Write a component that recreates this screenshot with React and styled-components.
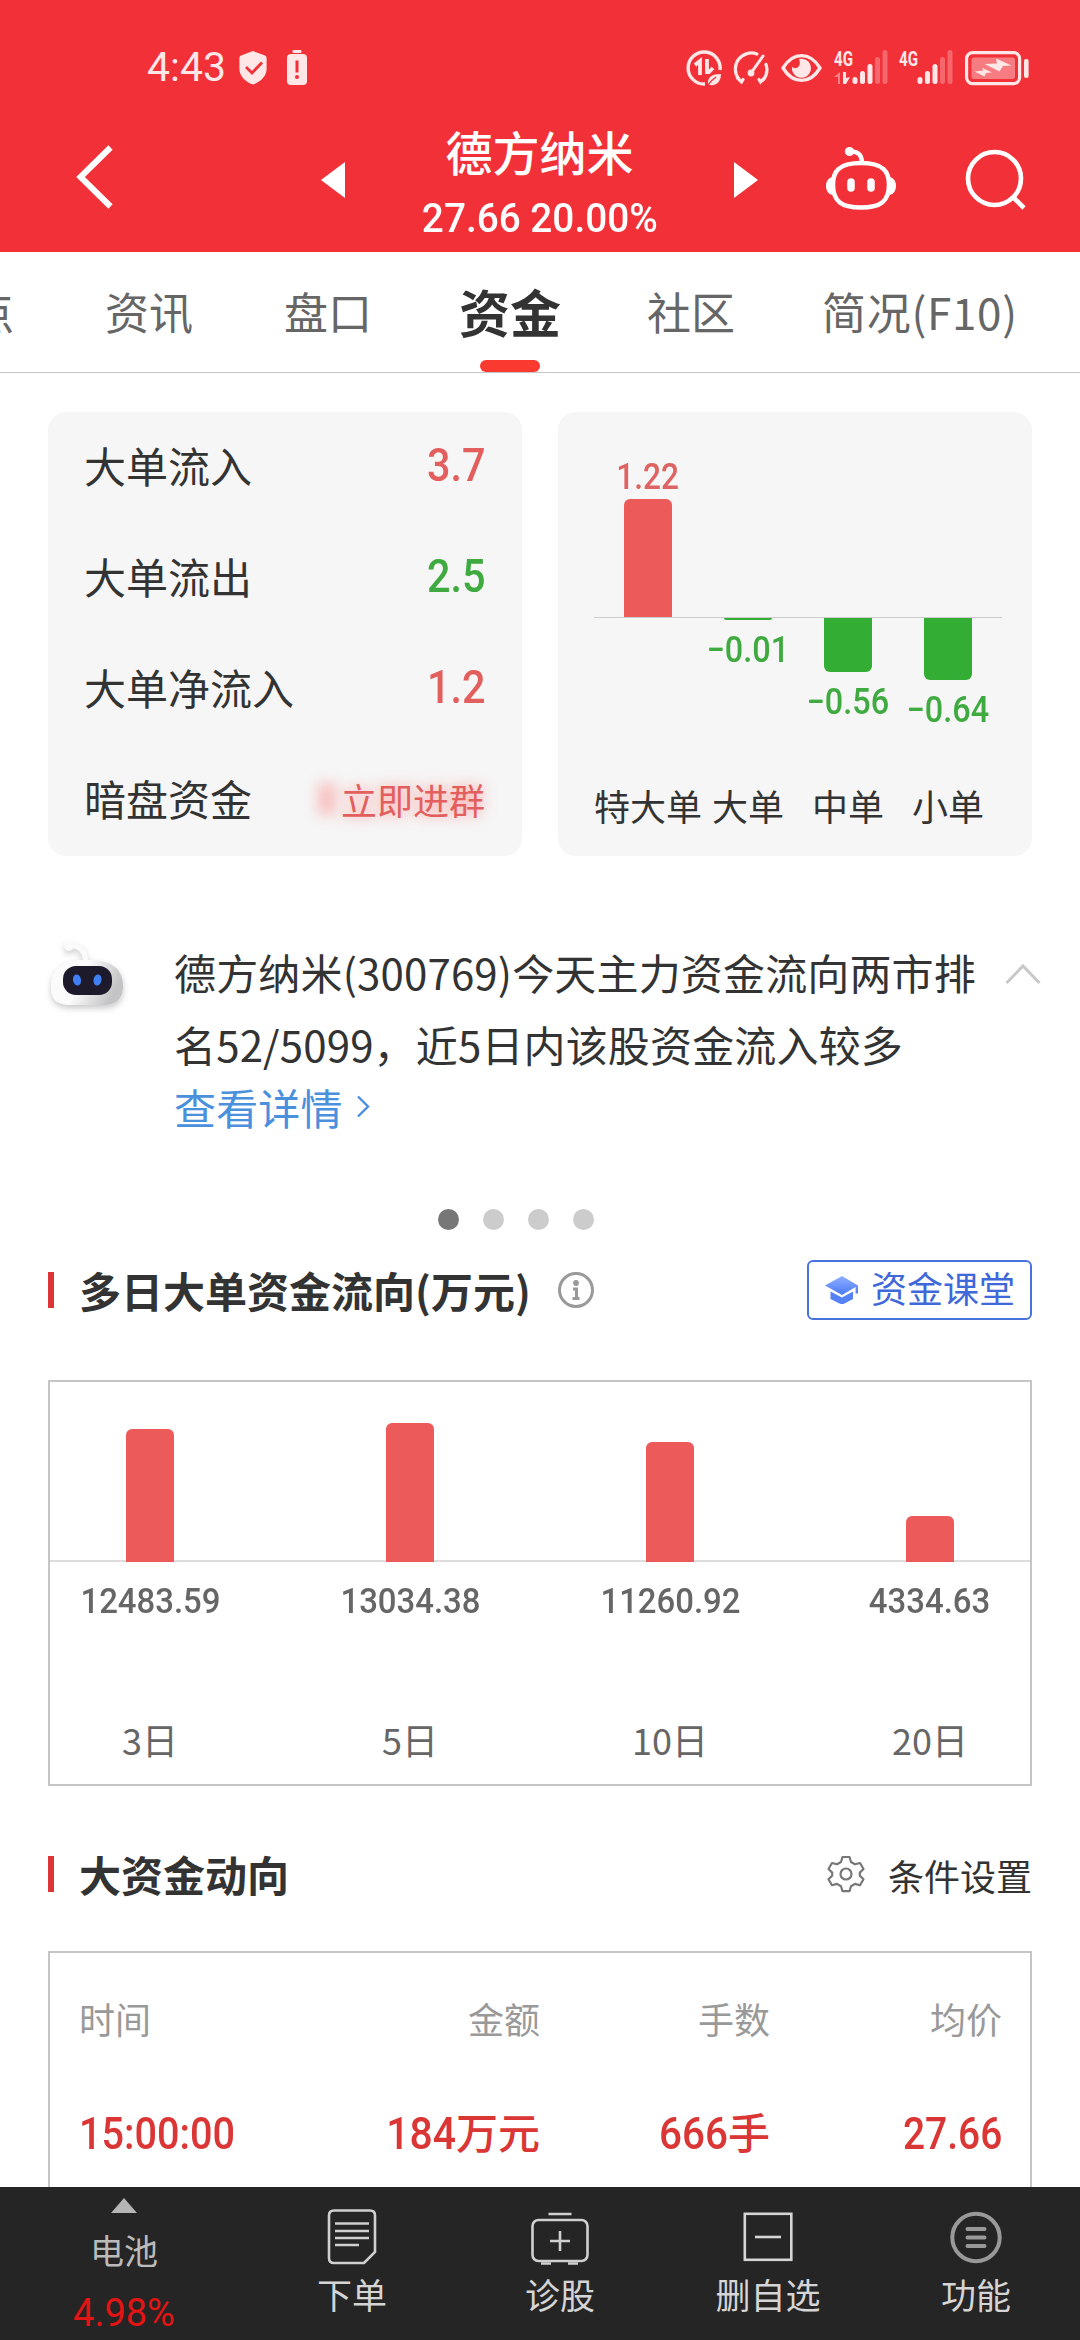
import { useState } from "react";
import styled, { createGlobalStyle } from "styled-components";

const GlobalStyle = createGlobalStyle`
    body {
        margin: 0;
        background: #fff;
        font-family: "Noto Sans CJK SC", "Noto Sans", sans-serif;
        color: #333;
    }
    svg {
        display: block;
        flex: none;
        overflow: visible;
    }
`
const Page = styled.div`
    width: 1080px;
    height: 2340px;
    overflow: hidden;
    display: flex;
    flex-direction: column;
`
const Num = styled.span`
    display: inline-block;
    font-family: Roboto, sans-serif;
    font-weight: ${(p) => p.$weight || 500};
    font-size: ${(p) => p.$size}px;
    line-height: 1.2;
    white-space: nowrap;
    transform: scaleX(${(p) => p.$x || 1});
    transform-origin: ${(p) => p.$from || "center"};
`

/* ---------- header ---------- */
const Header = styled.header`
    flex: none;
    height: 252px;
    background: #f13038;
    color: #fff;
`
const StatusBar = styled.div`
    height: 110px;
    box-sizing: border-box;
    padding: 25px 51px 0 147px;
    display: flex;
    align-items: center;
    color: #ffe6e7;
`
const StatusRight = styled.div`
    margin-left: auto;
    display: flex;
    align-items: center;
    gap: 11.7px;
`
const StatusLeft = styled.div`
    display: flex;
    align-items: center;
    gap: 20px;
    svg:first-of-type {
        margin-left: -7px;
    }
`
const Nav = styled.div`
    height: 142px;
    display: flex;
    align-items: center;
    padding: 0 54px 0 76px;
`
const NavTitle = styled.div`
    width: 390px;
    text-align: center;
    display: flex;
    flex-direction: column;
    align-items: center;
`
const StockName = styled.div`
    font-size: 47px;
    line-height: 62px;
    font-weight: 500;
    margin: 1px 0 12px;
`
const NavIcon = styled.svg`
    margin-left: ${(p) => p.$left}px;
`

/* ---------- tabs ---------- */
const Tabs = styled.nav`
    flex: none;
    height: 121px;
    box-sizing: border-box;
    border-bottom: 1px solid #c5c5c5;
    display: flex;
    gap: 91px;
`
const Tab = styled.div`
    position: relative;
    flex: none;
    font-size: ${(p) => (p.$on ? 51 : 44)}px;
    font-weight: ${(p) => (p.$on ? 700 : 400)};
    color: ${(p) => (p.$on ? "#333" : "#666")};
    line-height: 118px;
    margin: ${(p) => (p.$on ? "0 -5px 0 -4px" : 0)};
    &:first-child {
        margin-left: -30px;
    }
    &:last-child {
        margin-left: -4px;
        letter-spacing: 0.7px;
    }
    &::after {
        content: "";
        display: ${(p) => (p.$on ? "block" : "none")};
        position: absolute;
        left: 21px;
        bottom: 0;
        width: 60px;
        height: 12px;
        border-radius: 6px;
        background: #fa3a30;
    }
`

/* ---------- cards ---------- */
const Cards = styled.div`
    flex: none;
    display: flex;
    justify-content: space-between;
    padding: 39px 48px 0;
`
const Card = styled.div`
    width: 474px;
    height: 444px;
    border-radius: 18px;
    background: #f6f6f6;
`
const FlowRow = styled.div`
    height: 111px;
    box-sizing: border-box;
    padding: 0 37px 7px;
    display: flex;
    align-items: center;
    justify-content: space-between;
    font-size: 42px;
    span:first-child {
        margin-left: -1px;
    }
`
const FlowValue = styled.span`
    color: ${(p) => (p.$up ? "#e25f5e" : "#3faa3f")};
    display: flex;
    padding-top: 2px;
`
const JoinLink = styled.span`
    font-size: 36px;
    color: #e25f5e;
    text-shadow: 0 0 14px rgba(255, 70, 70, 0.55);
    padding-top: 3px;
    display: flex;
    align-items: center;
    &::before {
        content: "";
        width: 18px;
        height: 32px;
        margin-right: 5px;
        background: rgba(255, 70, 70, 0.3);
        filter: blur(7px);
    }
`
const OrderChart = styled.div`
    margin: 0 30px 0 36px;
    height: 444px;
`
const Above = styled.div`
    height: ${(p) => p.$height}px;
    display: flex;
    align-items: flex-end;
    gap: 52px;
    padding: 0 30px;
    border-bottom: 1px solid #ccc;
`
const Below = styled.div`
    height: ${(p) => p.$height}px;
    display: flex;
    gap: 52px;
    padding: 0 30px;
`
const Slot = styled.div`
    width: 48px;
    flex: none;
    display: flex;
    flex-direction: column;
    align-items: center;
    white-space: nowrap;
    color: ${(p) => p.$color || "#333"};
`
const Bar = styled.div`
    width: 48px;
    height: ${(p) => p.$h}px;
    background: ${(p) => (p.$down ? "#34ad34" : "#ed5a5a")};
    border-radius: ${(p) => (p.$down ? "0 0 6px 6px" : "6px 6px 0 0")};
    margin-bottom: ${(p) => (p.$down ? 9 : 0)}px;
`
const OrderName = styled.div`
    font-size: 36px;
    line-height: 48px;
`

/* ---------- message ---------- */
const Message = styled.div`
    flex: none;
    height: 353px;
    display: flex;
    padding: 80px 39px 0 46px;
    box-sizing: border-box;
`
const MessageText = styled.div`
    width: 832px;
    margin-left: 44px;
    font-size: 42px;
    line-height: 72px;
    letter-spacing: 0.16px;
    white-space: nowrap;
`
const DetailLink = styled.div`
    display: flex;
    align-items: center;
    gap: 14px;
    color: #4a90dd;
    line-height: 54px;
`
const Dots = styled.div`
    flex: none;
    height: 23px;
    display: flex;
    justify-content: center;
    gap: 24px;
    padding-right: 48px;
`
const Dot = styled.i`
    width: 21px;
    height: 21px;
    border-radius: 50%;
    background: ${(p) => (p.$on ? "#777" : "#ccc")};
`

/* ---------- sections ---------- */
const SectionHead = styled.div`
    flex: none;
    height: ${(p) => p.$height}px;
    box-sizing: border-box;
    display: flex;
    align-items: center;
    padding: ${(p) => p.$top || 0}px 48px ${(p) => p.$bottom || 0}px;
    &::before {
        content: "";
        width: 6px;
        height: 36px;
        background: #dd3435;
    }
`
const SectionTitle = styled.h2`
    margin: -1px 0 0 25px;
    font-size: 42px;
    line-height: 54px;
    font-weight: 700;
`
const InfoIcon = styled.svg`
    margin-left: 26px;
`
const ClassButton = styled.button`
    margin-left: auto;
    width: 225px;
    height: 60px;
    box-sizing: border-box;
    border: 2px solid #4a72dc;
    border-radius: 6px;
    background: #fff;
    display: flex;
    align-items: center;
    gap: 12px;
    padding: 0 0 0 16px;
    color: #3f68d8;
    font: 400 36px/48px "Noto Sans CJK SC", sans-serif;
    span {
        margin-top: -6px;
    }
`
const Setting = styled.div`
    margin-left: auto;
    display: flex;
    align-items: center;
    gap: 23px;
    font-size: 36px;
    line-height: 48px;
    span {
        margin-top: 1px;
    }
`
const DaysBox = styled.div`
    flex: none;
    margin: 0 48px;
    height: 406px;
    box-sizing: border-box;
    border: 2px solid #c5c5c5;
`
const DaysRow = styled.div`
    display: flex;
    justify-content: space-between;
    align-items: ${(p) => (p.$bars ? "flex-end" : "center")};
    padding: 0 76px;
    height: ${(p) => p.$height}px;
    background: ${(p) => (p.$bars ? "linear-gradient(#ddd, #ddd) bottom / 100% 2px no-repeat" : "none")};
    font-size: 36px;
`
const Table = styled.div`
    flex: none;
    margin: 0 48px;
    height: 236px;
    box-sizing: border-box;
    border: 2px solid #c5c5c5;
    border-bottom: 0;
    padding: 0 28px 0 29px;
`
const TableRow = styled.div`
    display: grid;
    grid-template-columns: 200px 261px 230px 232px;
    align-items: center;
    height: ${(p) => (p.$head ? 129 : 99)}px;
    font-size: ${(p) => (p.$head ? 36 : 42)}px;
    font-weight: ${(p) => (p.$head ? 400 : 500)};
    color: ${(p) => (p.$head ? "#999" : "#d93635")};
    div {
        text-align: right;
        white-space: nowrap;
        line-height: 56px;
    }
    div:first-child {
        text-align: left;
    }
`

/* ---------- bottom bar ---------- */
const Bottom = styled.footer`
    flex: none;
    height: 153px;
    background: #252525;
    display: flex;
`
const Sector = styled.div`
    width: 248px;
    display: flex;
    flex-direction: column;
    align-items: center;
    font-size: 34px;
    line-height: 44px;
    color: #bbb;
    padding-top: 11px;
    box-sizing: border-box;
    svg {
        margin-bottom: 15px;
    }
    span {
        color: #e31414;
        margin-top: 18px;
        line-height: 46px;
    }
`
const BottomItem = styled.div`
    width: 208px;
    display: flex;
    flex-direction: column;
    align-items: center;
    padding-top: 21px;
    box-sizing: border-box;
    font-size: 35px;
    line-height: 44px;
    color: #d5d5d5;
    svg {
        margin-bottom: 6px;
    }
`

const orders = [
    { name: "特大单", value: "1.22", h: 118 },
    { name: "大单", value: "−0.01", h: 2, down: true },
    { name: "中单", value: "−0.56", h: 54, down: true },
    { name: "小单", value: "−0.64", h: 62, down: true },
]
const days = [
    { name: "3日", value: "12483.59", h: 133 },
    { name: "5日", value: "13034.38", h: 139 },
    { name: "10日", value: "11260.92", h: 120 },
    { name: "20日", value: "4334.63", h: 46 },
]
const flows = [
    { name: "大单流入", value: "3.7", up: true },
    { name: "大单流出", value: "2.5", up: false },
    { name: "大单净流入", value: "1.2", up: true },
]
const tabs = ["点", "资讯", "盘口", "资金", "社区", "简况(F10)"]

function Signal({ data }) {
    return (
        <svg width="54" height="36" viewBox="0 0 54 36" fill="currentColor">
            <text x="0" y="15.500" fontFamily="Roboto" fontSize="20" fontWeight="700" textLength="19" lengthAdjust="spacingAndGlyphs">4G</text>
            {data && <path d="M6 22v12H4v-7H0z" opacity=".45" />}
            {data && <path d="M9 22h3v6l4-1-4 7H9z" />}
            <rect x="18.500" y="27" width="5" height="7" rx="2.500" />
            <rect x="26" y="21" width="5" height="13" rx="2.500" />
            <rect x="33.500" y="14" width="5" height="20" rx="2.500" />
            <rect x="41" y="7" width="5" height="27" rx="2.500" opacity=".3" />
            <rect x="48.500" y="0" width="5" height="34" rx="2.500" opacity=".3" />
        </svg>
    )
}

function StatusIcons() {
    return (
        <StatusRight>
            <svg width="36" height="36" viewBox="0 0 36 36" fill="none" stroke="currentColor" strokeWidth="3.400">
                <path d="M34 20A16 16 0 1 0 19 34" />
                <path d="M9 15l5-4v14M21 9v15M22 23l5-5" strokeWidth="3.800" />
                <path d="M22 35c-1-8 4-11 13-11 0 7-4 12-11 11z" fill="currentColor" stroke="none" />
                <path d="M22 35c3-4 5-6 8-8" stroke="#f13038" strokeWidth="1.400" />
            </svg>
            <svg width="36" height="36" viewBox="0 0 36 36" fill="none" stroke="currentColor" strokeWidth="3.200" strokeLinecap="round">
                <path d="M5.500 28.500A16 16 0 0 1 24 4" />
                <path d="M33 14.500a16 16 0 0 1-3 15.500" />
                <path d="M4.500 28l4 4 1.500-2.500M31.500 28l-4 4-1.500-2.500" />
                <path d="M30 6L18 23" strokeWidth="3" />
                <circle cx="18" cy="23" r="3.400" fill="currentColor" stroke="none" />
            </svg>
            <svg width="41" height="36" viewBox="0 0 41 36" fill="none" stroke="currentColor" strokeWidth="3.400">
                <path d="M2 18C12 1.500 29 1.500 39 18 29 34.500 12 34.500 2 18z" strokeLinejoin="round" />
                <path d="M18 9a9.500 9.500 0 1 1-7 8c4 3 10 0 7-8z" fill="currentColor" stroke="none" />
            </svg>
            <Signal data />
            <Signal />
            <svg width="64" height="36" viewBox="0 0 64 36">
                <rect x="1.600" y="2.600" width="53" height="31" rx="6" fill="none" stroke="currentColor" strokeWidth="3.200" />
                <rect x="6.500" y="7.500" width="43.500" height="21.500" rx="2.500" fill="currentColor" opacity=".42" />
                <path d="M19.500 14L32 13.500 31 8.500 46.500 15.500 38 16 34.500 21.500z" fill="currentColor" />
                <path d="M9.500 21.500L18 20.500 17.500 18 27 22.500 21 23 19.500 26.500z" fill="currentColor" />
                <rect x="59" y="9" width="4.600" height="19" rx="2" fill="currentColor" />
            </svg>
        </StatusRight>
    )
}

function App() {

    const [tab, setTab] = useState("资金");

    return (
        <Page>
            <GlobalStyle />
            <Header>
                <StatusBar>
                    <StatusLeft>
                        <Num $size={41} $weight={400}>4:43</Num>
                        <svg width="28" height="36" viewBox="0 0 28 36">
                            <path d="M14 1l12 4.500q1.600.6 1.600 2.500v11c0 7-6 13-13.600 15.500C6.400 32 .4 26 .4 19V8q0-1.900 1.600-2.500z" fill="currentColor" />
                            <path d="M7 17l6 6 10-10.500" fill="none" stroke="#f13038" strokeWidth="2.800" />
                        </svg>
                        <svg width="20" height="36" viewBox="0 0 20 36">
                            <rect x="5.500" y="0" width="9" height="3" rx="1" fill="currentColor" />
                            <rect x="0" y="4" width="20" height="31" rx="4" fill="currentColor" />
                            <path d="M10 10.500v12" stroke="#f13038" strokeWidth="3" />
                            <circle cx="10" cy="27" r="2" fill="#f13038" />
                        </svg>
                    </StatusLeft>
                    <StatusIcons />
                </StatusBar>
                <Nav>
                    <NavIcon $left={0} width="40" height="72" viewBox="0 0 40 72" fill="none" stroke="#fff" strokeWidth="6">
                        <path d="M34.500 2.500L4.500 32 34.500 61.500" />
                    </NavIcon>
                    <NavIcon $left={205} width="24" height="38" viewBox="0 0 24 38" fill="#fff">
                        <path d="M24 0v36L0 18z" />
                    </NavIcon>
                    <NavTitle>
                        <StockName>德方纳米</StockName>
                        <Num $size={41} $x={0.945}>27.66 20.00%</Num>
                    </NavTitle>
                    <NavIcon $left={0} width="24" height="38" viewBox="0 0 24 38" fill="#fff">
                        <path d="M0 0v36l24-18z" />
                    </NavIcon>
                    <NavIcon $left={68} width="70" height="72" viewBox="0 0 70 72" fill="none" stroke="#fff" strokeWidth="4.500">
                        <path d="M35 18C58 18 63 27 63 39.500 63 56 55 62.500 35 62.500S7 56 7 39.500C7 27 12 18 35 18z" />
                        <path d="M36 18C36 9 31 6 24 7" />
                        <circle cx="23.500" cy="6.500" r="4.600" fill="#fff" stroke="none" />
                        <path d="M6 32q-6 2-6 9t6 9zM64 32q6 2 6 9t-6 9z" fill="#fff" stroke="none" />
                        <path d="M25 37v6M45 37v6" strokeWidth="7.500" strokeLinecap="round" />
                    </NavIcon>
                    <NavIcon $left={70} width="60" height="72" viewBox="0 0 60 72" fill="none" stroke="#fff" strokeWidth="4.600">
                        <circle cx="28.500" cy="33.500" r="26.500" />
                        <path d="M47 52l11 11" />
                    </NavIcon>
                </Nav>
            </Header>
            <Tabs>
                {
                    tabs.map((a) => (
                        <Tab key={a} $on={a == tab} onClick={() => { setTab(a) }}>{a}</Tab>
                    ))
                }
            </Tabs>
            <Cards>
                <Card>
                    {
                        flows.map((a) => (
                            <FlowRow key={a.name}>
                                <span>{a.name}</span>
                                <FlowValue $up={a.up}><Num $size={47} $x={0.88} $from="right">{a.value}</Num></FlowValue>
                            </FlowRow>
                        ))
                    }
                    <FlowRow>
                        <span>暗盘资金</span>
                        <JoinLink>立即进群</JoinLink>
                    </FlowRow>
                </Card>
                <Card>
                    <OrderChart>
                        <Above $height={205}>
                            {
                                orders.map((a) => (
                                    <Slot key={a.name} $color="#dd6463">
                                        {!a.down && <Num $size={36} $x={0.88}>{a.value}</Num>}
                                        {!a.down && <Bar $h={a.h} />}
                                    </Slot>
                                ))
                            }
                        </Above>
                        <Below $height={163}>
                            {
                                orders.map((a) => (
                                    <Slot key={a.name} $color="#3faa3f">
                                        {a.down && <Bar $h={a.h} $down />}
                                        {a.down && <Num $size={36} $x={0.9}>{a.value}</Num>}
                                    </Slot>
                                ))
                            }
                        </Below>
                        <Below $height={60}>
                            {
                                orders.map((a) => (
                                    <Slot key={a.name}><OrderName>{a.name}</OrderName></Slot>
                                ))
                            }
                        </Below>
                    </OrderChart>
                </Card>
            </Cards>
            <Message>
                <svg width="84" height="84" viewBox="0 0 84 84">
                    <defs>
                        <linearGradient id="shell" x1="0" y1="0" x2="1" y2="0.300">
                            <stop offset="0.500" stopColor="#fbfbfb" />
                            <stop offset="1" stopColor="#c4c4c6" />
                        </linearGradient>
                        <filter id="soft" x="-30%" y="-30%" width="160%" height="170%">
                            <feDropShadow dx="0" dy="3" stdDeviation="3" floodColor="#000" floodOpacity="0.220" />
                        </filter>
                    </defs>
                    <g filter="url(#soft)">
                        <path d="M24 10q14-2 16 16" fill="none" stroke="#fbfbfb" strokeWidth="4.500" />
                        <circle cx="23" cy="10" r="4.500" fill="#fbfbfb" />
                        <path d="M42 24C66 24 77 33 77 50c0 14-8 19-20 19H25C12 69 5 64 5 51 5 33 17 24 42 24z" fill="url(#shell)" />
                    </g>
                    <rect x="17" y="30" width="49" height="29" rx="13" fill="#1c1a2b" />
                    <ellipse cx="31" cy="44" rx="4" ry="5.500" fill="#3f80f5" transform="rotate(-12 31 44)" />
                    <ellipse cx="51.500" cy="44" rx="4" ry="5.500" fill="#3f80f5" transform="rotate(12 51.500 44)" />
                </svg>
                <MessageText>
                    德方纳米(300769)今天主力资金流向两市排<br />
                    名52/5099，近5日内该股资金流入较多
                    <DetailLink>
                        查看详情
                        <svg width="14" height="24" viewBox="0 0 14 24" fill="none" stroke="#4a90dd" strokeWidth="2.400">
                            <path d="M1 1.500l10 10-10 10" />
                        </svg>
                    </DetailLink>
                </MessageText>
                <svg width="36" height="60" viewBox="0 0 36 60" fill="none" stroke="#c8c8c8" strokeWidth="3">
                    <path d="M1.500 47L18 30l16.500 17" />
                </svg>
            </Message>
            <Dots>
                <Dot $on /><Dot /><Dot /><Dot />
            </Dots>
            <SectionHead $height={148} $bottom={32}>
                <SectionTitle>多日大单资金流向(万元)</SectionTitle>
                <InfoIcon width="38" height="38" viewBox="0 0 38 38" fill="none" stroke="#999" strokeWidth="3">
                    <circle cx="19" cy="19" r="16.500" />
                    <circle cx="19" cy="12" r="2.900" fill="#999" stroke="none" />
                    <path d="M16 18h3.500v9M15.500 27.500h7" />
                </InfoIcon>
                <ClassButton>
                    <svg width="34" height="30" viewBox="0 0 34 30">
                        <defs>
                            <linearGradient id="cap" x1="0" y1="0" x2="0" y2="1">
                                <stop offset="0" stopColor="#8fb0ff" />
                                <stop offset="1" stopColor="#4a7af5" />
                            </linearGradient>
                        </defs>
                        <path d="M17 1l16 9.500v8h-2.400v-6.500L17 20 0 10.500z" fill="url(#cap)" />
                        <path d="M5.500 16.500L17 22.500l11-6v7.500L19.500 28.500q-2.500 1.200-5 0L5.500 24z" fill="#5583f7" />
                    </svg>
                    <span>资金课堂</span>
                </ClassButton>
            </SectionHead>
            <DaysBox>
                <DaysRow $bars $height={180}>
                    {days.map((a) => <Bar key={a.name} $h={a.h} />)}
                </DaysRow>
                <DaysRow $height={80}>
                    {days.map((a) => <Slot key={a.name} $color="#666"><Num $size={35} $x={0.94}>{a.value}</Num></Slot>)}
                </DaysRow>
                <DaysRow $height={194}>
                    {days.map((a) => <Slot key={a.name} $color="#666">{a.name}</Slot>)}
                </DaysRow>
            </DaysBox>
            <SectionHead $height={165} $top={11}>
                <SectionTitle>大资金动向</SectionTitle>
                <Setting>
                    <svg width="38" height="38" viewBox="0 0 38 38" fill="none" stroke="#777" strokeWidth="2.200" strokeLinejoin="round">
                        <path d="M15.500 2h7l1.500 5 4 2.300 5-1.300 3.500 6-3.700 3.600v3l3.700 3.600-3.500 6-5-1.300-4 2.300-1.500 5h-7l-1.500-5-4-2.300-5 1.300-3.500-6 3.700-3.600v-3L1.500 14 5 8l5 1.300L14 7z" />
                        <circle cx="19" cy="19" r="5.500" />
                    </svg>
                    <span>条件设置</span>
                </Setting>
            </SectionHead>
            <Table>
                <TableRow $head>
                    <div>时间</div>
                    <div>金额</div>
                    <div>手数</div>
                    <div>均价</div>
                </TableRow>
                <TableRow>
                    <div><Num $size={44} $x={0.9} $from="left">15:00:00</Num></div>
                    <div><Num $size={44} $x={0.93} $from="right">184</Num>万元</div>
                    <div><Num $size={44} $x={0.92} $from="right">666</Num>手</div>
                    <div><Num $size={44} $x={0.885} $from="right">27.66</Num></div>
                </TableRow>
            </Table>
            <Bottom>
                <Sector>
                    <svg width="26" height="15" viewBox="0 0 26 15" fill="#b5b5b5">
                        <path d="M13 0l13 15H0z" />
                    </svg>
                    电池
                    <Num $size={38} $weight={400}>4.98%</Num>
                </Sector>
                <BottomItem>
                    <svg width="50" height="58" viewBox="0 0 50 58" fill="none" stroke="#d0d0d0" strokeWidth="2.600">
                        <path d="M7 2.500h36q5 0 5 5V44L37 55H7q-5 0-5-5V7.500q0-5 5-5z" />
                        <path d="M8 15.500h34M8 23h34M8 30h34M8 37h24" />
                    </svg>
                    下单
                </BottomItem>
                <BottomItem>
                    <svg width="58" height="58" viewBox="0 0 58 58" fill="none" stroke="#d0d0d0" strokeWidth="2.600">
                        <rect x="1.500" y="12" width="55" height="41" rx="6" />
                        <path d="M17.500 6h23M29 23v20M19 33h20M10 55.500h10M37 55.500h10" />
                    </svg>
                    诊股
                </BottomItem>
                <BottomItem>
                    <svg width="50" height="58" viewBox="0 0 50 58" fill="none" stroke="#d5d5d5" strokeWidth="2.600">
                        <rect x="1.800" y="5.800" width="46.500" height="46" />
                        <path d="M12 29h26" />
                    </svg>
                    删自选
                </BottomItem>
                <BottomItem>
                    <svg width="52" height="58" viewBox="0 0 52 58" fill="none" stroke="#999" strokeWidth="4">
                        <circle cx="26" cy="29.500" r="23.700" />
                        <path d="M17.500 21h17M17.500 29.500h17M17.500 38h17" strokeLinecap="round" />
                    </svg>
                    功能
                </BottomItem>
            </Bottom>
        </Page>
    );
}

export default App
